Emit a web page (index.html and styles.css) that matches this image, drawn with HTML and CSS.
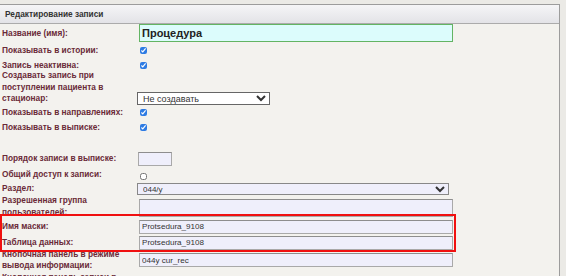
FILE: index.html
```html
<!DOCTYPE html>
<html>
<head>
  <title>Редактирование записи</title>
  <link rel="stylesheet" href="styles.css">
</head>
<body>
  <div class="panel">
    <div class="panel-head">Редактирование записи</div>
    <div class="panel-body">
      <div class="row r-name">
        <label class="lbl">Название (имя):</label>
        <input type="text" class="name-input" value="Процедура">
      </div>
      <div class="row">
        <label class="lbl">Показывать в истории:</label>
        <input type="checkbox" class="chk" checked>
      </div>
      <div class="row">
        <label class="lbl">Запись неактивна:</label>
        <input type="checkbox" class="chk" checked>
      </div>
      <div class="row r-multi r-bottom">
        <label class="lbl">Создавать запись при поступлении пациента в стационар:</label>
        <select class="sel sel-white">
          <option>Не создавать</option>
        </select>
      </div>
      <div class="row">
        <label class="lbl">Показывать в направлениях:</label>
        <input type="checkbox" class="chk" checked>
      </div>
      <div class="row">
        <label class="lbl">Показывать в выписке:</label>
        <input type="checkbox" class="chk" checked>
      </div>
      <div class="row r-empty"></div>
      <div class="row r-order">
        <label class="lbl">Порядок записи в выписке:</label>
        <input type="text" class="txt txt-short" value="">
      </div>
      <div class="row">
        <label class="lbl">Общий доступ к записи:</label>
        <input type="checkbox" class="chk chk-off">
      </div>
      <div class="row r-tight">
        <label class="lbl">Раздел:</label>
        <select class="sel sel-wide">
          <option>044/у</option>
        </select>
      </div>
      <div class="row r-multi">
        <label class="lbl">Разрешенная группа пользователей:</label>
        <input type="text" class="txt txt-tall" value="">
      </div>
      <div class="row r-field">
        <label class="lbl">Имя маски:</label>
        <input type="text" class="txt" value="Protsedura_9108">
      </div>
      <div class="row r-field">
        <label class="lbl">Таблица данных:</label>
        <input type="text" class="txt" value="Protsedura_9108">
      </div>
      <div class="row r-multi r-last">
        <label class="lbl">Кнопочная панель в режиме вывода информации:</label>
        <input type="text" class="txt" value="044у cur_rec">
      </div>
      <div class="row r-multi r-top">
        <label class="lbl">Кнопочная панель записи в режиме редактирования:</label>
        <input type="text" class="txt txt-long" value="">
      </div>
    </div>
  </div>
  <div class="highlight"></div>
</body>
</html>
```

FILE: styles.css
```css
body {
  margin: 0;
  background: #ebeae6;
  font-family: "Liberation Sans", Arial, sans-serif;
  position: relative;
  height: 276px;
  overflow: hidden;
}
.panel {
  margin: 4px 6px 0 -1px;
  border: 1px solid #9c9c9c;
  border-bottom: none;
  background: #f3f2ee;
  height: 300px;
}
.panel-head {
  height: 18px;
  line-height: 18px;
  padding-left: 5px;
  font-size: 8.3px;
  font-weight: bold;
  color: #333;
  background: linear-gradient(#f5f5f7, #e3e3e7);
  border-bottom: 1px solid #ababab;
}
.panel-body {
  padding-left: 2px;
}
.row {
  display: flex;
  align-items: center;
  min-height: 15px;
}
.lbl {
  width: 135px;
  flex: none;
  font-size: 8.3px;
  font-weight: bold;
  color: #6a2a38;
  line-height: 11.7px;
}
.r-multi .lbl {
  width: 128px;
  margin-right: 7px;
}
.r-name {
  height: 19px;
  align-items: flex-start;
}
.r-name .lbl {
  margin-top: 4px;
}
.r-bottom {
  align-items: flex-end;
  margin-top: -3px;
}
.r-top {
  align-items: flex-start;
}
.r-last {
  margin-top: -2px;
}
.r-empty {
  height: 16px;
}
.r-order {
  height: 16px;
}
.r-tight {
  min-height: 12px;
  height: 13px;
}
.r-field {
  height: 16px;
}
.name-input {
  box-sizing: border-box;
  width: 314px;
  height: 18px;
  margin: 0 0 0 2px;
  padding: 0 2px;
  border: 1px solid #63b463;
  background: #dcfcfc;
  font-family: "Liberation Sans", Arial, sans-serif;
  font-size: 11px;
  font-weight: bold;
  color: #222;
  outline: none;
}
.chk {
  width: 7px;
  height: 7px;
  margin: 0 0 0 3px;
  accent-color: #2d7be3;
}
.chk-off {
  margin-top: 3px;
}
.txt {
  box-sizing: border-box;
  width: 314px;
  height: 14px;
  margin: 0 0 0 2px;
  padding: 0 2px;
  border: 1px solid #a9a9a9;
  border-top-color: #8e8e8e;
  background: #efeffb;
  font-family: "Liberation Sans", Arial, sans-serif;
  font-size: 8.1px;
  color: #333;
  outline: none;
}
.txt-short {
  width: 34px;
  margin-left: 1px;
}
.txt-tall {
  height: 18px;
  margin-top: 2px;
}
.txt-long {
  width: 362px;
  margin-top: 4px;
}
.sel {
  box-sizing: border-box;
  height: 12px;
  padding: 0 1px;
  border: 1px solid #888;
  border-radius: 0;
  font-family: "Liberation Sans", Arial, sans-serif;
  font-size: 8px;
  color: #333;
  background: #efeffb;
}
.sel-white {
  width: 133px;
  height: 13px;
  font-size: 9px;
  background: #fff;
  border-color: #666;
}
.sel-wide {
  width: 312px;
}
.highlight {
  position: absolute;
  left: 0;
  top: 214px;
  width: 452px;
  height: 34px;
  border: 2px solid #f01010;
}
```
